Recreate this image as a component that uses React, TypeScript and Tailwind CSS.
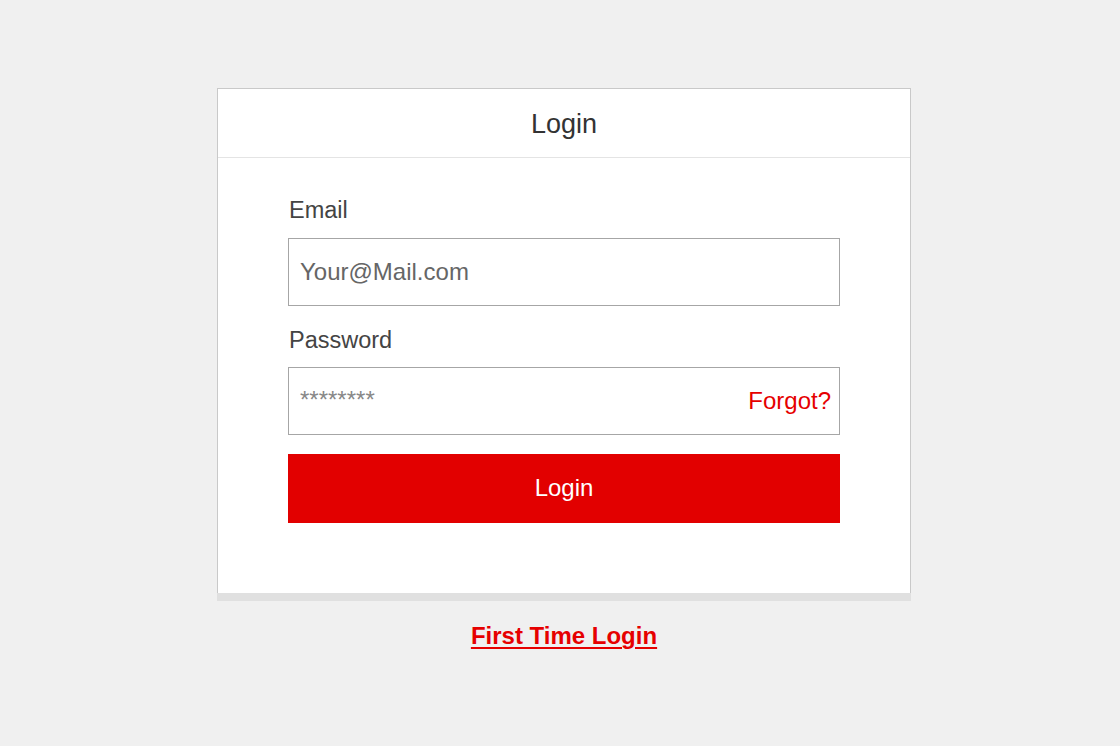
import React from "react";

export default function App() {
  return (
    <div
      className="w-[1120px] h-[746px] bg-[#f0f0f0] pt-[88px] pl-[8px] flex flex-col items-center"
      style={{ fontFamily: '"Liberation Sans", Arial, sans-serif' }}
    >
      <div className="w-[694px] flex flex-col">
        <div className="bg-white border border-[#c9c9c9] border-b-0">
          <div className="h-[69px] border-b border-[#e4e4e4] flex items-center justify-center pt-[3px]">
            <span className="text-[27px] text-[#333] leading-none">Login</span>
          </div>
          <div className="px-[70px] pt-[38px] pb-[70px]">
            <div className="text-[23.5px] leading-[28px] text-[#444] pl-[1px] mb-[14px]">Email</div>
            <div className="h-[68px] border border-[#a6a6a6] flex items-center px-[11px]">
              <span className="text-[24px] text-[#666] -mt-[1px]">Your@Mail.com</span>
            </div>
            <div className="text-[23.5px] leading-[28px] text-[#444] pl-[1px] mt-[20px] mb-[13px]">Password</div>
            <div className="h-[68px] border border-[#a6a6a6] flex items-center justify-between pl-[11px] pr-[8px]">
              <span className="text-[24px] text-[#888] -mt-[3px]">********</span>
              <span className="text-[24px] text-[#e60000]">Forgot?</span>
            </div>
            <div className="mt-[19px] h-[69px] bg-[#e20000] flex items-center justify-center">
              <span className="text-[24px] text-white -mt-[1px]">Login</span>
            </div>
          </div>
        </div>
        <div className="h-[8px] bg-[#e0e0e0]" />
      </div>
      <div className="mt-[21px] leading-[28px]">
        <span className="text-[24px] font-bold text-[#e60000] underline underline-offset-[3px] decoration-[1.5px]">First Time Login</span>
      </div>
    </div>
  );
}
